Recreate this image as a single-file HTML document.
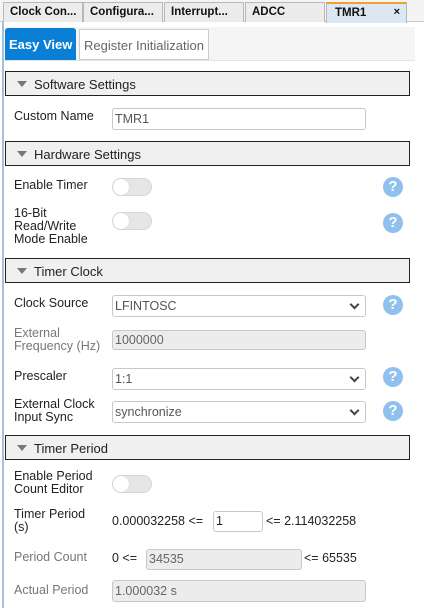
<!DOCTYPE html>
<html><head><style>
*{box-sizing:border-box;margin:0;padding:0}
body{width:424px;height:608px;overflow:hidden;background:#fff;font-family:"Liberation Sans",sans-serif;font-size:12.5px;color:#222;position:relative}
.a{position:absolute}
.tab{position:absolute;top:2px;height:20px;background:#ececec;border:1px solid #b8b8b8;border-bottom:none;font-weight:bold;font-size:11.5px;padding:3px 0 0 6px;color:#111}
.hdr{position:absolute;left:5px;width:405px;height:25px;background:#f0f0f0;border:1px solid #222;font-size:13px;padding:5px 0 0 28px;color:#222}
.hdr:before{content:"";position:absolute;left:11px;top:9px;border-left:5px solid transparent;border-right:5px solid transparent;border-top:6px solid #777}
.lbl{position:absolute;left:14px;line-height:13px;font-size:12.5px}
.g{color:#777}
.in{position:absolute;border:1px solid #c8c8c8;border-radius:3px;background:#fff;padding:3px 2px;font-size:12.5px;color:#555;height:22px}
.dis{background:#ececec;color:#666}
.sel:after{content:"";position:absolute;right:7px;top:5px;width:5px;height:5px;border-right:2px solid #444;border-bottom:2px solid #444;transform:rotate(45deg)}
.tg{position:absolute;left:112px;width:40px;height:18px;border-radius:9px;background:#e6e6e6;border:1px solid #d8d8d8}
.tg:after{content:"";position:absolute;left:0;top:0;width:16px;height:16px;border-radius:8px;background:#fff;box-shadow:0 0 1px #bbb}
.hp{position:absolute;left:383px;width:20px;height:20px;border-radius:10px;background:#90c0ee;color:#fff;font-weight:bold;font-size:15px;text-align:center;line-height:20px}
</style></head><body>
<div class="a" style="left:0;top:0;width:424px;height:22px;background:#f4f4f4;border-bottom:1px solid #c8c8c8"></div>
<div class="tab" style="left:3px;width:80px">Clock Con...</div>
<div class="tab" style="left:83px;width:80px">Configura...</div>
<div class="tab" style="left:164px;width:80px">Interrupt...</div>
<div class="tab" style="left:245px;width:80px">ADCC</div>
<div class="tab" style="left:326px;width:81px;background:#dde6f3;border-top:2px solid #f0a030;height:21px;padding-left:8px">TMR1<span style="position:absolute;right:6px;top:2px;font-size:11px">×</span></div>
<div class="a" style="left:2px;top:22px;width:2px;height:586px;background:#a8bfdc"></div>
<div class="a" style="left:4px;top:27px;width:411px;height:34px;background:#f5f5f5;border-bottom:1px solid #e4e4e4"></div>
<div class="a" style="left:5px;top:28px;width:71px;height:32px;background:#0a7fd6;color:#fff;font-weight:bold;font-size:13px;padding:9px 0 0 4px;border-radius:3px 3px 0 0">Easy View</div>
<div class="a" style="left:79px;top:29px;width:130px;height:31px;background:#fff;border:1px solid #ccc;color:#666;font-size:13px;padding:8px 0 0 4px">Register Initialization</div>

<div class="hdr" style="top:71px">Software Settings</div>
<div class="lbl" style="top:110px">Custom Name</div>
<div class="in" style="left:112px;top:108px;width:254px">TMR1</div>

<div class="hdr" style="top:141px">Hardware Settings</div>
<div class="lbl" style="top:179px">Enable Timer</div>
<div class="tg" style="top:178px"></div><div class="hp" style="top:177px">?</div>
<div class="lbl" style="top:207px">16-Bit<br>Read/Write<br>Mode Enable</div>
<div class="tg" style="top:212px"></div><div class="hp" style="top:213px">?</div>

<div class="hdr" style="top:258px">Timer Clock</div>
<div class="lbl" style="top:297px">Clock Source</div>
<div class="in sel" style="left:112px;top:295px;width:254px">LFINTOSC</div><div class="hp" style="top:295px">?</div>
<div class="lbl g" style="top:327px">External<br>Frequency (Hz)</div>
<div class="in dis" style="left:112px;top:330px;width:254px;height:20px;padding-top:2px">1000000</div>
<div class="lbl" style="top:370px">Prescaler</div>
<div class="in sel" style="left:112px;top:368px;width:254px">1:1</div><div class="hp" style="top:367px">?</div>
<div class="lbl" style="top:398px">External Clock<br>Input Sync</div>
<div class="in sel" style="left:112px;top:401px;width:254px">synchronize</div><div class="hp" style="top:401px">?</div>

<div class="hdr" style="top:435px">Timer Period</div>
<div class="lbl" style="top:470px">Enable Period<br>Count Editor</div>
<div class="tg" style="top:475px"></div>
<div class="lbl" style="top:508px">Timer Period<br>(s)</div>
<div class="a" style="left:112px;top:514px">0.000032258 &lt;=</div>
<div class="in" style="left:213px;top:511px;width:50px;height:21px;color:#222;padding-top:2px">1</div>
<div class="a" style="left:266px;top:514px">&lt;= 2.114032258</div>
<div class="lbl g" style="top:551px">Period Count</div>
<div class="a" style="left:112px;top:551px">0 &lt;=</div>
<div class="in dis" style="left:146px;top:549px;width:156px;height:21px;padding-top:2px">34535</div>
<div class="a" style="left:304px;top:551px">&lt;= 65535</div>
<div class="lbl g" style="top:584px">Actual Period</div>
<div class="in dis" style="left:112px;top:580px;width:254px">1.000032 s</div>
</body></html>
